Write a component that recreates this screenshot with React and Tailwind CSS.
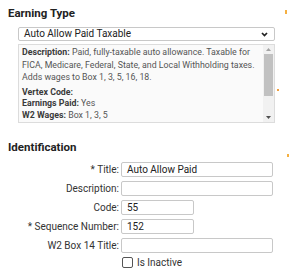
export default function App() {
  const rows = [
    { label: 'Title:', req: true, value: 'Auto Allow Paid', w: 'w-[152px]' },
    { label: 'Description:', value: '', w: 'w-[152px]' },
    { label: 'Code:', value: '55', w: 'w-[73px]' },
    { label: 'Sequence Number:', req: true, value: '152', w: 'w-[73px]' },
    { label: 'W2 Box 14 Title:', value: '', w: 'w-[152px]' },
  ]

  return (
    <div className="relative w-[289px] h-[277px] bg-white overflow-hidden font-['Roboto',sans-serif] text-[#333]">
      <div className="absolute left-[285px] top-[10px] w-[2px] h-[4px] bg-[#f5b041]" />
      <div className="absolute left-[277px] top-[89px] w-[2px] h-[2px] bg-[#f0a040]" />
      <div className="absolute left-[287px] top-[154px] w-[2px] h-[3px] bg-[#f5b041]" />

      <div className="pl-[8px] pt-[6px]">
        <h2 className="text-[11.5px] font-bold leading-[14px] text-[#222]">Earning Type</h2>

        <div className="ml-[10px] mt-[7px] w-[257px] h-[14px] border border-[#c8c8c8] rounded-[2px] flex items-center justify-between pl-[5px] pr-[6px] text-[10px] leading-[12px] text-[#222]">
          <span>Auto Allow Paid Taxable</span>
          <svg width="7" height="5" viewBox="0 0 7 5">
            <path d="M1 1 L3.5 3.6 L6 1" fill="none" stroke="#222" strokeWidth="1.7" />
          </svg>
        </div>

        <div className="ml-[10px] mt-[3px] w-[257px] h-[79px] border border-[#dcdcdc] bg-[#fafafa] flex">
          <div className="flex-1 pl-[3px] pt-[1px] text-[8.8px] text-[#555] whitespace-nowrap">
            <p className="leading-[12.5px]">
              <b className="text-[#3a3a3a]">Description:</b> Paid, fully-taxable auto allowance. Taxable for
              <br />
              FICA, Medicare, Federal, State, and Local Withholding taxes.
              <br />
              Adds wages to Box 1, 3, 5, 16, 18.
            </p>
            <p className="mt-[3px] leading-[11.5px] font-bold text-[#3a3a3a]">Vertex Code:</p>
            <p className="leading-[11.5px]"><b className="text-[#3a3a3a]">Earnings Paid:</b> Yes</p>
            <p className="leading-[11.5px]"><b className="text-[#3a3a3a]">W2 Wages:</b> Box 1, 3, 5</p>
          </div>
          <div className="w-[11px] bg-[#f1f1f1] flex flex-col items-center">
            <div className="h-[9px] flex items-center">
              <svg width="5" height="3" viewBox="0 0 5 3"><path d="M0 3 L2.5 0 L5 3 Z" fill="#a3a3a3" /></svg>
            </div>
            <div className="w-[9px] h-[42px] bg-[#c1c1c1]" />
            <div className="flex-1" />
            <div className="h-[9px] flex items-center">
              <svg width="5" height="3" viewBox="0 0 5 3"><path d="M0 0 L2.5 3 L5 0 Z" fill="#505050" /></svg>
            </div>
          </div>
        </div>

        <h2 className="mt-[17px] text-[11.5px] font-bold leading-[14px] text-[#222]">Identification</h2>

        <div className="mt-[8px] flex flex-col gap-[4px]">
          {rows.map((r) => (
            <div key={r.label} className="flex items-center h-[15px]">
              <div className="w-[113px] text-right text-[10px] leading-[12px] text-[#333] pr-[2px] whitespace-nowrap">
                {r.req && <span>* </span>}
                {r.label}
              </div>
              <div className={`${r.w} h-[15px] border border-[#c8c8c8] rounded-[2px] flex items-center pl-[5px] text-[10px] leading-[12px] text-[#222]`}>
                {r.value}
              </div>
            </div>
          ))}
          <div className="flex items-center h-[11px] pl-[114px]">
            <div className="w-[11px] h-[11px] border border-[#555] rounded-[2px] bg-white" />
            <span className="ml-[4px] text-[10px] leading-[12px] text-[#333]">Is Inactive</span>
          </div>
        </div>
      </div>
    </div>
  )
}
